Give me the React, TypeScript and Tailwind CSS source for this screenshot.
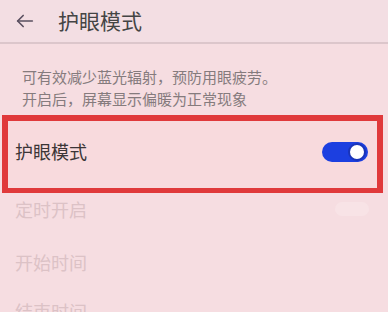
export default function App() {
  return (
    <div
      className="w-[388px] h-[312px] overflow-hidden bg-[#f6dde1] text-[#3a3435]"
      style={{ fontFamily: '"Noto Sans CJK SC", "Noto Sans", sans-serif' }}
    >
      {/* header */}
      <div className="h-[42px] flex items-center bg-[#f3dee3]">
        <svg width="22" height="22" viewBox="0 0 24 24" className="ml-[14px]" fill="none" stroke="#5a5060" strokeWidth="1.8" strokeLinecap="round" strokeLinejoin="round">
          <path d="M20 12H4" />
          <path d="M10 6l-6 6 6 6" />
        </svg>
        <span className="ml-[22px] text-[21px] text-[#444]">护眼模式</span>
      </div>
      <div className="h-[2px] bg-[#dcc6cb]" />

      <div className="pl-[22px] pt-[22px] text-[15px] leading-[22px] text-[#857b7d]">
        <p>可有效减少蓝光辐射，预防用眼疲劳。</p>
        <p>开启后，屏幕显示偏暖为正常现象</p>
      </div>

      {/* highlighted row */}
      <div className="mt-[5px] ml-[2px] w-[381px] h-[78px] border-[6px] border-b-[5px] border-[#e0393b] bg-[#f8dadd] flex items-center justify-between pl-[7px] pr-[9px] pb-[6px]">
        <span className="text-[18px] text-[#3b3536]">护眼模式</span>
        <div className="w-[46px] h-[20px] rounded-full bg-[#1c3fe0] flex items-center justify-end pr-[2px]">
          <div className="w-[18px] h-[18px] rounded-full bg-white border-2 border-[#1a34b8]" />
        </div>
      </div>

      {/* faded rows */}
      <div className="pl-[15px] pr-[19px] text-[18px] text-[#dcc2c6]">
        <div className="mt-[6px] h-[20px] flex items-center justify-between leading-[20px]">
          <span>定时开启</span>
          <div className="w-[34px] h-[14px] rounded-full bg-[#f8e3e6]" />
        </div>
        <div className="mt-[33px] h-[20px] leading-[20px]">开始时间</div>
        <div className="mt-[29px] h-[20px] leading-[20px]">结束时间</div>
      </div>
    </div>
  );
}
